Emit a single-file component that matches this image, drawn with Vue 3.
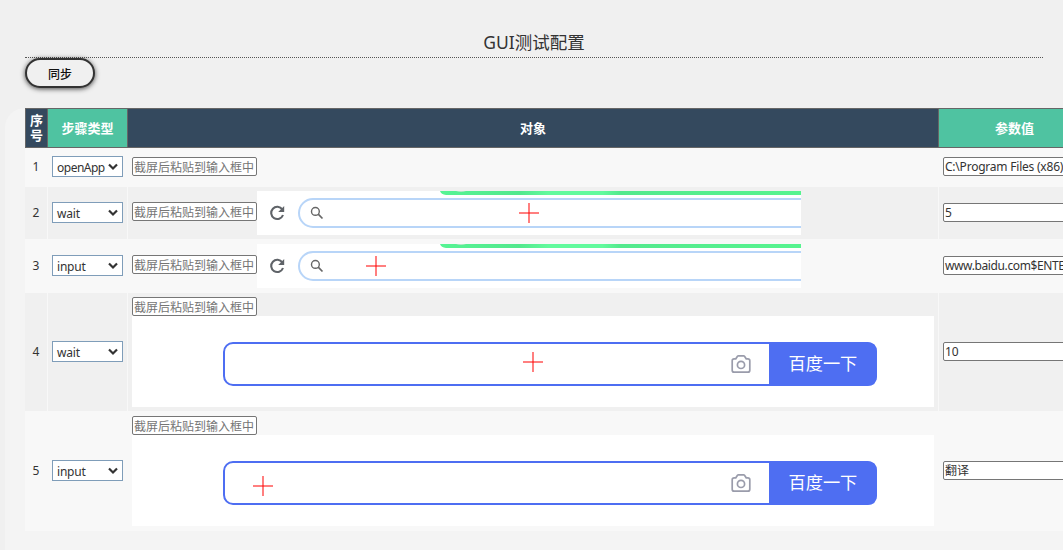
<script setup>
const hint = '截屏后粘贴到输入框中'
const rows = [
  { id: 1, type: 'openApp', value: 'C:\\Program Files (x86)', shot: '' },
  { id: 2, type: 'wait', value: '5', shot: 'bar', x: 272, y: 22 },
  { id: 3, type: 'input', value: 'www.baidu.com$ENTE', shot: 'bar', x: 119, y: 22 },
  { id: 4, type: 'wait', value: '10', shot: 'search', x: 401, y: 46 },
  { id: 5, type: 'input', value: '翻译', shot: 'search', x: 131, y: 51 },
]
</script>

<template>
  <div class="page">
    <h1 class="title">GUI测试配置</h1>
    <button class="sync">同步</button>
    <div class="panel">
      <div class="row head">
        <div class="th no">序号</div>
        <div class="th green">步骤类型</div>
        <div class="th">对象</div>
        <div class="th green">参数值</div>
      </div>
      <div v-for="r in rows" :key="r.id" class="row" :class="'r' + r.id">
        <div class="cell num">{{ r.id }}</div>
        <div class="cell">
          <div class="select">
            <span>{{ r.type }}</span>
            <svg width="12" height="8" viewBox="0 0 12 8"><path d="M2 1.5L6 5.5L10 1.5" fill="none" stroke="#333" stroke-width="2.2" /></svg>
          </div>
        </div>
        <div class="cell target">
          <div class="field paste">{{ hint }}</div>
          <svg v-if="r.shot === 'bar'" class="bar" width="544" height="44" viewBox="0 0 544 44">
            <defs>
              <linearGradient :id="'g' + r.id">
                <stop offset="0" stop-color="#56f494" />
                <stop offset=".22" stop-color="#52e88d" />
                <stop offset=".3" stop-color="#62fa9d" />
                <stop offset=".45" stop-color="#62fa9d" />
                <stop offset=".5" stop-color="#53e98d" />
                <stop offset="1" stop-color="#56f48f" />
              </linearGradient>
            </defs>
            <rect width="544" height="44" fill="#fff" />
            <path d="M183 0H544V4H189Q184 3.5 183 0Z" :fill="`url(#g${r.id})`" />
            <path d="M199 0H209Q204 2 199 0Z" fill="#b5e8c8" />
            <path d="M544 8H56A14 14 0 0 0 56 36H544" fill="none" stroke="#b8d5f8" stroke-width="2" />
            <path
              d="M25.3 18.4A6.1 6.1 0 1 0 26 24"
              fill="none" stroke="#5f6368" stroke-width="2.1"
            />
            <path d="M27.2 15V21H21.2Z" fill="#5f6368" />
            <circle cx="58.4" cy="20.4" r="3.9" fill="none" stroke="#666" stroke-width="1.4" />
            <path d="M61.2 23.2L65.5 27.5" stroke="#666" stroke-width="1.7" />
            <path class="cross" :d="`M${r.x - 10} ${r.y}h20`" />
            <path class="cross" :d="`M${r.x} ${r.y - 10}v20`" />
          </svg>
          <svg v-if="r.shot === 'search'" class="search" width="802" height="91" viewBox="0 0 802 91">
            <rect width="802" height="91" fill="#fff" />
            <rect x="92" y="27" width="652" height="42" rx="9" fill="#fff" stroke="#4e6ef2" stroke-width="2" />
            <path d="M637 26H735Q745 26 745 36V60Q745 70 735 70H637Z" fill="#4e6ef2" />
            <g fill="none" stroke="#9a9cab" stroke-width="1.7">
              <path d="M602.2 42.8h1.6l1.7-2.6q.3-.4.9-.4h5.2q.6 0 .9.4l1.7 2.6h1.6q2 0 2 2v9.4q0 2-2 2h-13.6q-2 0-2-2v-9.4q0-2 2-2z" />
              <circle cx="609" cy="48.9" r="3.6" />
            </g>
            <text x="656.5" y="54" font-size="17.2" fill="#fff">百度一下</text>
            <path class="cross" :d="`M${r.x - 10} ${r.y}h20`" />
            <path class="cross" :d="`M${r.x} ${r.y - 10}v20`" />
          </svg>
        </div>
        <div class="cell">
          <div class="field value">{{ r.value }}</div>
        </div>
      </div>
    </div>
  </div>
</template>

<style>
body { background: #f0f0f0; overflow: hidden; }
</style>

<style scoped>
.page {
  box-sizing: border-box;
  width: 1063px;
  height: 550px;
  padding: 28px 0 0 5px;
  overflow: hidden;
  background: #f0f0f0;
  color: #333;
  font: 12px/15px "Noto Sans", "Noto Sans CJK SC", sans-serif;
}
.title {
  box-sizing: border-box;
  width: 1018px;
  height: 30px;
  margin: 0 0 0 20px;
  border-bottom: 1px dotted #555;
  text-align: center;
  font-size: 17.5px;
  line-height: 28px;
  font-weight: 400;
}
.sync {
  display: block;
  box-sizing: border-box;
  width: 70px;
  height: 30px;
  margin: 0 0 0 20px;
  padding: 1px 0 0;
  border: 2px solid #333;
  border-radius: 15px;
  background: #f0f0f0;
  box-shadow: 0 1px 5px rgba(0, 0, 0, .7);
  color: #111;
  font: 500 12px/15px "Noto Sans CJK SC", sans-serif;
}
.panel {
  box-sizing: border-box;
  width: 1120px;
  height: 460px;
  margin-top: 20px;
  padding-left: 20px;
  border-radius: 20px;
  background: #f4f4f4;
}
.row {
  display: grid;
  grid-template-columns: 22px 80px 811px 152px;
  background: #f8f8f8;
}
.head { height: 40px; background: #34495e; }
.th {
  display: flex;
  align-items: center;
  justify-content: center;
  box-sizing: border-box;
  border: 1px solid #666;
  border-right: 0;
  color: #fff;
  font-weight: 700;
  font-size: 13px;
  line-height: 15px;
  text-align: center;
}
.no { padding: 0 3px; }
.green { background: #4fc3a1; }
.cell {
  display: flex;
  box-sizing: border-box;
  align-items: center;
  padding: 0 4px 1px;
  border-left: 1px solid #f8f8f8;
}
.num { justify-content: center; border-left: 0; }
.r1 { height: 39px; }
.r2 { height: 52px; background: #f0f0f0; }
.r3 { height: 54px; }
.r4 { height: 118px; background: #f0f0f0; }
.r5 { height: 120px; }
.r1 .cell { padding-bottom: 2px; }
.select {
  display: flex;
  box-sizing: border-box;
  justify-content: space-between;
  align-items: center;
  width: 71px;
  height: 21px;
  padding: 0 3px 0 4px;
  border: 1px solid #7f9db9;
  background: #fff;
}
.select span { padding-top: 2px; letter-spacing: -.5px; }
.r2 .select span, .r3 .select span, .r4 .select span, .r5 .select span { letter-spacing: -.2px; }
.field {
  box-sizing: border-box;
  height: 19px;
  border: 1px solid #767676;
  border-radius: 2px;
  background: #fff;
  padding: 0 1px;
  line-height: 17px;
  white-space: nowrap;
  overflow: hidden;
}
.paste { width: 125px; color: #757575; flex: none; line-height: 19px; }
.value { width: 143px; flex: none; letter-spacing: -.38px; }
.r1 .value { letter-spacing: -.22px; }
.r4 .value, .r5 .value { letter-spacing: 0; }
.target { align-items: flex-start; padding-top: 9px; }
.r2 .target { padding-top: 4px; }
.r3 .target { padding-top: 5px; }
.r2 .paste, .r3 .paste { margin-top: 11px; }
.r4 .target, .r5 .target { flex-direction: column; padding-top: 4px; }
.r5 .target { padding-top: 5px; }
svg { display: block; flex: none; }
.cross { stroke: rgba(255, 0, 0, .5); stroke-width: 2; fill: none; }
</style>
